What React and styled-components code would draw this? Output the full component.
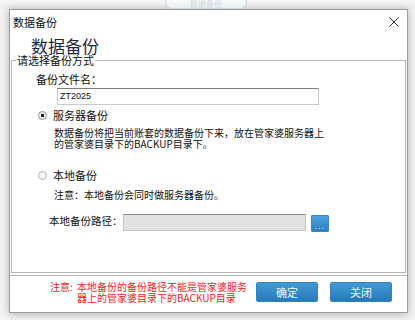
import styled, { createGlobalStyle } from 'styled-components'

const Global = createGlobalStyle`
  body {
    margin: 0;
    background: #f3f3f3;
    font-family: "Noto Sans CJK SC", "Noto Sans", sans-serif;
    color: #111;
  }
`

const Page = styled.div`
  width: 415px;
  height: 320px;
  overflow: hidden;
  background: #f3f3f3;
`

const TopStrip = styled.div`
  height: 9px;
  display: flex;
  background: linear-gradient(#f6f6f6, #ececec);
`

const BackTab = styled.div`
  margin-left: 165px;
  width: 80px;
  height: 8px;
  border: 1px solid #c4d6de;
  border-top: none;
  border-radius: 0 0 7px 7px;
  background: linear-gradient(#f9fafb, #eaeef2);
  overflow: hidden;
  font-size: 8px;
  line-height: 8px;
  color: #d3d7db;
  text-align: center;
`

const Dialog = styled.div`
  margin-left: 9px;
  width: 397px;
  height: 302px;
  border: 1px solid #9c9c9c;
  background: #fff;
  box-shadow: 0 1px 8px rgba(0, 0, 0, 0.28);
  display: flex;
  flex-direction: column;
`

const TitleBar = styled.div`
  height: 23px;
  display: flex;
  align-items: center;
  justify-content: space-between;
  padding: 0 8px 0 3px;
  font-size: 11px;
  line-height: 12px;
  color: #111;
`

const CloseIcon = () => (
  <svg width="10" height="10" viewBox="0 0 10 10">
    <path d="M0.5 0.5 L9.5 9.5 M9.5 0.5 L0.5 9.5" stroke="#333" strokeWidth="1" />
  </svg>
)

const Heading = styled.h1`
  margin: 3px 0 0;
  padding-left: 21px;
  height: 19px;
  font-size: 17px;
  line-height: 19px;
  font-weight: 400;
  color: #1c2745;
`

const Group = styled.fieldset`
  flex: 1;
  margin: 0 1px 1px;
  padding: 0;
  min-width: 0;
  border: 1px solid #b7b7b7;
  display: flex;
  flex-direction: column;
`

const Legend = styled.legend`
  margin-left: 4px;
  padding: 0 1px;
  font-size: 11px;
  line-height: 11px;
  color: #111;
`

const FieldLabel = styled.div`
  margin-top: 7px;
  padding-left: 24px;
  font-size: 11px;
  line-height: 12px;
`

const TextInput = styled.div`
  margin: 3px 0 0 45px;
  width: 258px;
  height: 15px;
  border: 1px solid #c9c9c9;
  border-top-color: #7d7d7d;
  background: #fff;
  font-family: "Liberation Sans", sans-serif;
  font-size: 9px;
  line-height: 15px;
  padding-left: 2px;
  box-sizing: content-box;
  color: #111;
`

const RadioRow = styled.label`
  display: flex;
  align-items: center;
  gap: 6px;
  margin-top: ${p => p.$top}px;
  padding-left: 26px;
  font-size: 11px;
  line-height: 12px;
`

const RadioDot = styled.span`
  width: 7px;
  height: 7px;
  border-radius: 50%;
  border: 1px solid ${p => (p.$checked ? '#8f8f8f' : '#b5b5b5')};
  background: radial-gradient(circle, ${p => (p.$checked ? '#222 0 1.6px, #f4f4f4 2px' : '#fdfdfd 0, #ececec 100%')});
`

const Note = styled.p`
  margin: ${p => p.$top}px 0 0;
  padding-left: 42px;
  font-size: 10px;
  line-height: 11px;
  white-space: nowrap;
`

const PathRow = styled.div`
  display: flex;
  align-items: flex-start;
  margin-top: 14px;
  padding-left: 37px;
`

const PathLabel = styled.span`
  width: 74px;
  font-size: 10.5px;
  line-height: 13px;
`

const PathInput = styled.div`
  width: 181px;
  height: 15px;
  border: 1px solid #c4c4c4;
  border-top-color: #8a8a8a;
  background: #e2e2e2;
`

const BrowseButton = styled.button`
  margin: 1px 0 0 5px;
  width: 18px;
  height: 17px;
  padding: 0;
  border: 1px solid #3c86c3;
  border-radius: 1px;
  background: linear-gradient(#4ea2dc, #2c7fc2);
  color: #dcecf8;
  font-size: 9px;
  line-height: 20px;
  letter-spacing: 1px;
  font-family: "Liberation Sans", sans-serif;
`

const Footer = styled.div`
  height: 31px;
  margin-top: 1px;
  border-top: 1px solid #b7b7b7;
  display: flex;
  align-items: flex-start;
  padding: 5px 15px 0 40px;
`

const Warning = styled.div`
  flex: 1;
  display: flex;
  color: #f51c1c;
  font-size: 10px;
  line-height: 11px;
  white-space: nowrap;
`

const WarnLabel = styled.span`
  width: 27px;
`

const Button = styled.button`
  width: 62px;
  height: 20px;
  margin-top: 1px;
  margin-left: ${p => p.$gap}px;
  padding: 0;
  border: 1px solid #3381bd;
  border-radius: 2px;
  background: linear-gradient(#429ad5, #2779b9);
  color: #f3f8fc;
  font-family: "Noto Sans CJK SC", sans-serif;
  font-size: 11px;
  line-height: 18px;
`

export default function App() {
  return (
    <Page>
      <Global />
      <TopStrip>
        <BackTab>数据备份</BackTab>
      </TopStrip>
      <Dialog>
        <TitleBar>
          <span>数据备份</span>
          <CloseIcon />
        </TitleBar>
        <Heading>数据备份</Heading>
        <Group>
          <Legend>请选择备份方式</Legend>
          <FieldLabel>备份文件名：</FieldLabel>
          <TextInput>ZT2025</TextInput>
          <RadioRow $top={4}>
            <RadioDot $checked />
            服务器备份
          </RadioRow>
          <Note $top={6}>
            数据备份将把当前账套的数据备份下来，放在管家婆服务器上
            <br />
            的管家婆目录下的BACKUP目录下。
          </Note>
          <RadioRow $top={20}>
            <RadioDot />
            本地备份
          </RadioRow>
          <Note $top={8}>注意：本地备份会同时做服务器备份。</Note>
          <PathRow>
            <PathLabel>本地备份路径：</PathLabel>
            <PathInput />
            <BrowseButton>...</BrowseButton>
          </PathRow>
        </Group>
        <Footer>
          <Warning>
            <WarnLabel>注意:</WarnLabel>
            <span>
              本地备份的备份路径不能是管家婆服务
              <br />
              器上的管家婆目录下的BACKUP目录
            </span>
          </Warning>
          <Button $gap={0}>确定</Button>
          <Button $gap={12}>关闭</Button>
        </Footer>
      </Dialog>
    </Page>
  )
}
